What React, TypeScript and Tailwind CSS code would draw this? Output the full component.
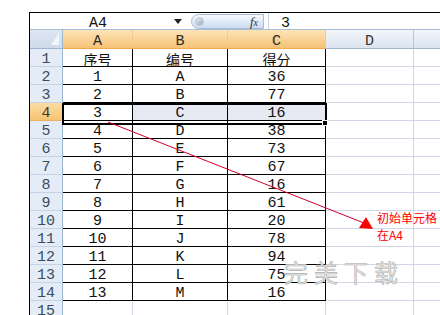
import React from 'react'

const mono = { fontFamily: '"Liberation Mono", "Noto Sans CJK SC", monospace' }
const cjk = { fontFamily: '"Noto Sans CJK SC", "Liberation Sans", sans-serif' }

const rows: [string, string, string][] = [
  ['1', 'A', '36'],
  ['2', 'B', '77'],
  ['3', 'C', '16'],
  ['4', 'D', '38'],
  ['5', 'E', '73'],
  ['6', 'F', '67'],
  ['7', 'G', '16'],
  ['8', 'H', '61'],
  ['9', 'I', '20'],
  ['10', 'J', '78'],
  ['11', 'K', '94'],
  ['12', 'L', '75'],
  ['13', 'M', '16'],
]

function RowHeader({ n, active }: { n: number; active?: boolean }) {
  return (
    <div
      className={
        'w-[33px] shrink-0 text-center pt-[5px] leading-[12px] border-r border-b text-[15px] ' +
        (active
          ? 'bg-gradient-to-b from-[#fbdca4] to-[#f6c46f] border-r-[#e6a550] border-b-[#eab060] text-[#3a3a3a]'
          : 'bg-[#e4ecf7] border-r-[#9eb6ce] border-b-[#c6d3e4] text-[#3d4b5e]')
      }
      style={mono}
    >
      {n}
    </div>
  )
}

function DataRow({ n, cells }: { n: number; cells: [string, string, string] }) {
  const sel = n === 4
  const cell = 'shrink-0 text-center pt-[5px] leading-[12px] border-r border-b border-black '
  return (
    <div className="flex h-[18px] text-[15px] text-[#111]" style={mono}>
      <RowHeader n={n} active={sel} />
      <div className={cell + 'w-[70px] bg-white'}>{cells[0]}</div>
      <div className={cell + 'w-[95px] ' + (sel ? 'bg-[#e6e9f2]' : 'bg-white')}>{cells[1]}</div>
      <div className={cell + 'w-[98px] ' + (sel ? 'bg-[#e6e9f2]' : 'bg-white')}>{cells[2]}</div>
      <div className="w-[88px] shrink-0 border-r border-b border-[#d0d7e5]" />
      <div className="flex-1 border-b border-[#d0d7e5]" />
    </div>
  )
}

export default function App() {
  return (
    <div className="relative w-[440px] h-[315px] overflow-hidden bg-white">
      <div className="ml-[29px] mt-[12px] border-l border-t border-black h-[303px] flex flex-col">
        {/* formula bar */}
        <div className="h-[16px] flex items-start bg-white text-[15px] text-[#111]">
          <div className="w-[136px] h-[16px] pt-[5px] leading-[11px] text-center" style={mono}>
            A4
          </div>
          <div className="w-[24px] h-[16px] flex items-center justify-center">
            <svg width="8" height="5" viewBox="0 0 8 5">
              <path d="M0 0 L8 0 L4 5 Z" fill="#222" />
            </svg>
          </div>
          <div className="ml-[1px] mt-[1px] w-[73px] h-[15px] rounded-l-full rounded-r-[3px] border border-[#a7bcd6] bg-gradient-to-b from-[#f7faff] to-[#cbdcf0] flex items-center justify-between pl-[3px] pr-[5px]">
            <div className="w-[9px] h-[9px] rounded-full bg-gradient-to-br from-[#e9eef4] to-[#9eaabb] border border-[#b9c4d2]" />
            <span className="italic text-[13px] text-[#333] leading-none" style={{ fontFamily: '"Liberation Serif", serif' }}>
              f<span className="text-[10px]">x</span>
            </span>
          </div>
          <div className="w-px h-[16px] bg-[#c5d3e4] ml-[4px]" />
          <div className="ml-[12px] h-[16px] pt-[5px] leading-[11px]" style={mono}>
            3
          </div>
        </div>
        <div className="h-[4px] bg-[#dfe7f2] border-t border-[#a9bdd6]" />

        {/* column header */}
        <div className="flex h-[19px] text-[15px] text-[#2a2a2a]" style={mono}>
          <div className="relative w-[33px] shrink-0 bg-gradient-to-b from-[#dde6f2] to-[#cfdbea] border-r border-b border-[#9eb6ce]">
            <svg className="absolute right-[3px] bottom-[3px]" width="8" height="12" viewBox="0 0 8 12">
              <path d="M8 0 L8 12 L0 12 Z" fill="#f3f6fa" />
            </svg>
          </div>
          {['A', 'B', 'C'].map((c, i) => (
            <div
              key={c}
              className={
                'shrink-0 text-center pt-[5px] leading-[13px] bg-gradient-to-b from-[#fde4b6] to-[#f6c275] border-r border-r-[#f0c98c] border-b border-b-[#f2a94f] ' +
                (i === 0 ? 'w-[70px]' : i === 1 ? 'w-[95px]' : 'w-[98px]')
              }
            >
              {c}
            </div>
          ))}
          <div className="w-[88px] shrink-0 text-center pt-[5px] leading-[13px] bg-gradient-to-b from-[#f3f6fb] to-[#dbe4f0] border-r border-r-[#b5c7dc] border-b border-b-[#9eb6ce] text-[#333]">
            D
          </div>
          <div className="flex-1 bg-gradient-to-b from-[#f3f6fb] to-[#dbe4f0] border-b border-[#9eb6ce]" />
        </div>

        {/* row 1 labels */}
        <div className="flex h-[18px] text-[14px] text-[#111]" style={cjk}>
          <RowHeader n={1} />
          <div className="w-[70px] shrink-0 text-center pt-[3px] leading-[14px] border-r border-b border-black">序号</div>
          <div className="w-[95px] shrink-0 text-center pt-[3px] leading-[14px] border-r border-b border-black">编号</div>
          <div className="w-[98px] shrink-0 text-center pt-[3px] leading-[14px] border-r border-b border-black">得分</div>
          <div className="w-[88px] shrink-0 border-r border-b border-[#d0d7e5]" />
          <div className="flex-1 border-b border-[#d0d7e5]" />
        </div>

        {rows.map((r, i) => (
          <DataRow key={i} n={i + 2} cells={r} />
        ))}

        {/* row 15 */}
        <div className="flex h-[18px] text-[15px]">
          <RowHeader n={15} />
          <div className="w-[70px] shrink-0 border-r border-[#d0d7e5]" />
          <div className="w-[95px] shrink-0 border-r border-[#d0d7e5]" />
          <div className="w-[98px] shrink-0 border-r border-[#d0d7e5]" />
          <div className="w-[88px] shrink-0 border-r border-[#d0d7e5]" />
        </div>
      </div>

      {/* selection A4:C4 */}
      <div className="absolute left-[62px] top-[103px] w-[265px] h-[22px] border-2 border-black" />
      <div className="absolute left-[322px] top-[120px] w-[6px] h-[6px] bg-black border border-white" />

      {/* annotation arrow */}
      <svg className="absolute left-0 top-0" width="440" height="315" viewBox="0 0 440 315">
        <line x1="108" y1="122" x2="364" y2="223" stroke="#d4002a" strokeWidth="1" />
        <path d="M373 229 L359 228 L366 217 Z" fill="#ff0000" />
      </svg>
      <div className="absolute left-[377px] top-[209px] text-[12px] leading-[17px] text-[#ff0000]" style={cjk}>
        初始单元格
        <br />
        在A4
      </div>

      {/* watermark */}
      <div
        className="absolute left-[284px] top-[254px] text-[24px] tracking-[6px] text-[#e6e6e6] [-webkit-text-stroke:0.6px_#b0b0b0]"
        style={cjk}
      >
        完美下载
      </div>
    </div>
  )
}
